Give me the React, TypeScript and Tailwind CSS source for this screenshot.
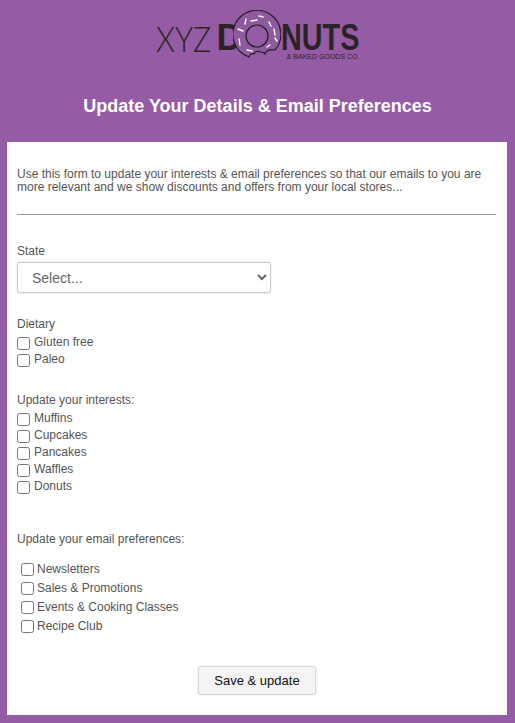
const dietary = ['Gluten free', 'Paleo'];
const interests = ['Muffins', 'Cupcakes', 'Pancakes', 'Waffles', 'Donuts'];
const emails = ['Newsletters', 'Sales & Promotions', 'Events & Cooking Classes', 'Recipe Club'];

function Donut() {
  const sprinkles = [
    [-19, -7, -14, -5], [-11, -17, -12, -12], [-6, -15, 0, -16], [2, -20, 6, -19], [12, -14, 14, -10],
    [17, -7, 18, -1], [18, 2, 20, 5], [-18, 3, -17, 9], [-10, 14, -5, 15], [10, 11, 13, 9],
  ];
  return (
    <svg width="48" height="50" viewBox="-24 -26 48 50" className="shrink-0">
      <path
        d="M 18 14 A 24 24 0 1 0 -8 21 C -7 18 -5 17 -3 18 C -2 15 1 15 3 16 C 5 15 7 17 8 18 C 9 15 12 13 18 14 Z"
        fill="#8f5aa0"
        stroke="#231f20"
        strokeWidth="1.2"
      />
      <circle cx="0" cy="0" r="11" fill="#965ba5" stroke="#231f20" strokeWidth="1.2" />
      {sprinkles.map(([x1, y1, x2, y2], i) => (
        <line key={i} x1={x1} y1={y1} x2={x2} y2={y2} stroke="#ffffff" strokeWidth="1.4" strokeLinecap="round" />
      ))}
    </svg>
  );
}

function Logo() {
  return (
    <div className="flex justify-center pt-[9px] h-[75px]">
      <div className="relative flex items-center h-[52px] w-[204px] text-[#2b2425] whitespace-nowrap">
        <span className="w-[52px] mr-[9px] mt-[5px] origin-left scale-x-[0.87] font-['Lato'] font-light text-[35px] leading-[30px]">
          XYZ
        </span>
        <span className="w-[16px] mt-[5px] font-['Liberation_Sans'] font-bold text-[36px] leading-[30px]">D</span>
        <Donut />
        <span className="w-[79px] mt-[5px] origin-left scale-x-[0.8] font-['Liberation_Sans'] font-bold text-[36px] leading-[30px]">
          NUTS
        </span>
        <span className="absolute right-0 top-[44px] font-['Liberation_Sans'] text-[7px] leading-none">
          &amp; BAKED GOODS CO.
        </span>
      </div>
    </div>
  );
}

function CheckRow({ label }: { label: string }) {
  return (
    <label className="flex items-center h-[17px]">
      <input type="checkbox" className="w-[13px] h-[13px] mr-[4px] mt-[2px]" />
      <span>{label}</span>
    </label>
  );
}

export default function App() {
  return (
    <div className="w-[515px] h-[723px] bg-[#965ba5] font-['Liberation_Sans',Arial,sans-serif] overflow-hidden">
      <Logo />
      <h1 className="h-[67px] pt-[19px] text-center text-white font-bold text-[18px] leading-[24px]">
        Update Your Details &amp; Email Preferences
      </h1>
      <main className="mx-[7px] w-[500px] h-[573px] bg-white px-[10px] pt-[26px] text-[12px] leading-[13px] text-[#555555]">
        <p className="w-[480px]">
          Use this form to update your interests &amp; email preferences so that our emails to you are more relevant and
          we show discounts and offers from your local stores...
        </p>
        <hr className="mt-[20px] w-[479px] border-t border-[#999999]" />

        <div className="mt-[29px] leading-[14px]">State</div>
        <select className="mt-[4px] block w-[254px] h-[31px] pl-[10px] bg-white text-[14px] text-[#666666] border border-[#cccccc] rounded-[3px] shadow-[0_0_2px_rgba(0,0,0,0.15)]">
          <option>Select...</option>
        </select>

        <div className="mt-[24px] leading-[14px]">Dietary</div>
        <div className="mt-[3px]">
          {dietary.map((d) => (
            <CheckRow key={d} label={d} />
          ))}
        </div>

        <div className="mt-[25px] leading-[14px]">Update your interests:</div>
        <div className="mt-[3px]">
          {interests.map((d) => (
            <CheckRow key={d} label={d} />
          ))}
        </div>

        <div className="mt-[37px] leading-[14px]">Update your email preferences:</div>
        <div className="mt-[14px] pl-[4px]">
          {emails.map((d) => (
            <label key={d} className="flex items-center h-[19px]">
              <input type="checkbox" className="w-[13px] h-[13px] mr-[3px]" />
              <span>{d}</span>
            </label>
          ))}
        </div>

        <div className="mt-[30px] flex justify-center">
          <button className="w-[118px] h-[29px] bg-[#f4f4f4] border border-[#d8d8d8] rounded-[3px] text-[13px] text-[#111111] shadow-[0_0_2px_rgba(0,0,0,0.15)]">
            Save &amp; update
          </button>
        </div>
      </main>
    </div>
  );
}
